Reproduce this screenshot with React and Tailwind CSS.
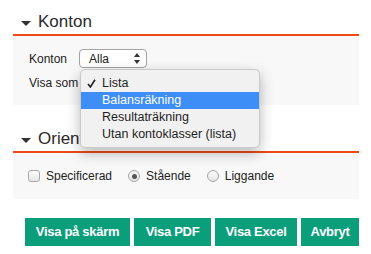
import React from 'react';

const font = { fontFamily: '"Liberation Sans", Arial, sans-serif' };

function Caret() {
  return (
    <svg width="10" height="5" viewBox="0 0 10 5" className="mr-[7px] mt-[2px]">
      <path d="M0 0 H10 L5 5 Z" fill="#333" />
    </svg>
  );
}

function SectionHeading({ children, className = '' }) {
  return (
    <div className={`flex items-center pl-[8px] pb-[2px] border-b-2 border-[#ef4a14] ${className}`}>
      <Caret />
      <span className="text-[17px] leading-[20px] text-[#2a2a2a]">{children}</span>
    </div>
  );
}

function Radio({ checked }) {
  return (
    <span className="w-[12px] h-[12px] rounded-full border border-[#a8a8a8] bg-gradient-to-b from-[#fdfdfd] to-[#e4e4e4] flex items-center justify-center shadow-[inset_0_1px_1px_rgba(0,0,0,0.05)]">
      {checked && <span className="w-[5px] h-[5px] rounded-full bg-[#555]" />}
    </span>
  );
}

const menuItems = ['Lista', 'Balansräkning', 'Resultaträkning', 'Utan kontoklasser (lista)'];

export default function App() {
  return (
    <div className="w-[371px] h-[254px] bg-white text-[#222] overflow-hidden" style={font}>
      <div className="pl-[13px] pr-[12px] pt-[12px]">
        <SectionHeading>Konton</SectionHeading>

        <div className="relative bg-[#f8f8f8] pl-[16px] pt-[13px] pb-[13px]">
          <div className="flex items-center h-[19px]">
            <span className="w-[50px] text-[12px]">Konton</span>
            <div className="w-[68px] h-[19px] rounded-[4px] border border-[#a3a3a3] bg-white flex items-center justify-between pl-[9px] pr-[6px]">
              <span className="text-[12px] leading-none">Alla</span>
              <svg width="6" height="11" viewBox="0 0 6 11">
                <path d="M0 4 L3 0 L6 4 Z" fill="#333" />
                <path d="M0 7 L3 11 L6 7 Z" fill="#333" />
              </svg>
            </div>
          </div>
          <div className="flex items-center h-[19px] mt-[5px]">
            <span className="text-[12px]">Visa som</span>
          </div>

          {/* open select menu */}
          <div className="absolute left-[67px] top-[33px] w-[180px] z-10 pt-[5px] pb-[4px] rounded-[5px] border border-[#c9c9c9] bg-[#f1f1f1] shadow-[0_5px_14px_rgba(0,0,0,0.28)]">
            {menuItems.map((item, i) => (
              <div
                key={item}
                className={`relative h-[17px] flex items-center pl-[21px] text-[12.5px] ${i === 1 ? 'bg-[#3d8ef7] text-white' : 'text-[#1e1e1e]'}`}
              >
                {i === 0 && (
                  <svg width="9" height="9" viewBox="0 0 9 9" className="absolute left-[6px] top-[4px]">
                    <path d="M1 5 L3.4 8 L8 0.8" fill="none" stroke="#222" strokeWidth="1.6" />
                  </svg>
                )}
                {item}
              </div>
            ))}
          </div>
        </div>

        <SectionHeading className="mt-[24px]">Orientering</SectionHeading>

        <div className="bg-[#f8f8f8] pl-[15px] h-[46px] flex items-center gap-[16px] text-[12px] leading-[18px]">
          <label className="flex items-center gap-[6px]">
            <span className="w-[12px] h-[12px] rounded-[3px] border border-[#a8a8a8] bg-gradient-to-b from-[#fdfdfd] to-[#e6e6e6]" />
            Specificerad
          </label>
          <label className="flex items-center gap-[6px]">
            <Radio checked />
            Stående
          </label>
          <label className="flex items-center gap-[6px]">
            <Radio />
            Liggande
          </label>
        </div>

        <div className="flex justify-end gap-[4px] mt-[19px]">
          {[
            ['Visa på skärm', 'w-[105px]'],
            ['Visa PDF', 'w-[77px]'],
            ['Visa Excel', 'w-[82px]'],
            ['Avbryt', 'w-[58px]'],
          ].map(([label, w]) => (
            <button
              key={label}
              className={`${w} h-[28px] bg-[#0a9e7b] text-white font-bold text-[13px] tracking-[-0.3px] flex items-center justify-center`}
            >
              {label}
            </button>
          ))}
        </div>
      </div>
    </div>
  );
}
